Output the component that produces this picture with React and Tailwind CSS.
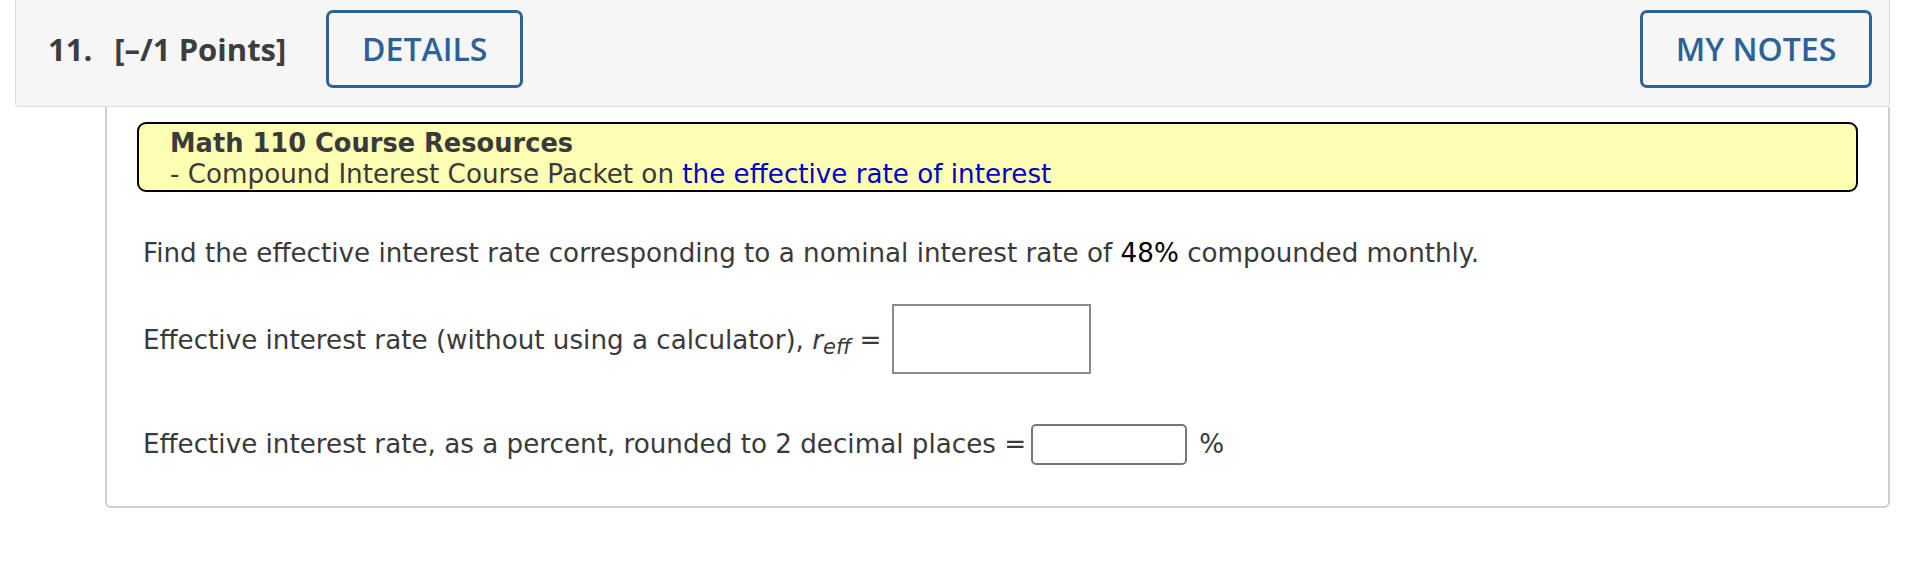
import React from "react";

const QuestionHeader = () => {
  return (
    <div className="mx-[15px] mr-[22px] h-[107px] bg-[#f6f6f6] border-x border-b border-[#dcdcdc] rounded-b-[4px] flex items-start justify-between pt-[10px] pl-[32px] pr-[17px]">
      <div className="flex items-start gap-[40px]">
        <div className="h-[78px] flex items-center font-['Open_Sans',sans-serif] font-bold text-[31px] text-[#3d3d3d]">
          <span>11.</span>
          <span className="ml-[22px]">[–/1 Points]</span>
        </div>
        <button className="h-[78px] w-[197px] border-[3px] border-[#2e6395] rounded-[7px] font-['Open_Sans',sans-serif] font-semibold text-[32px] text-[#2c6296] bg-transparent">
          DETAILS
        </button>
      </div>
      <button className="h-[78px] w-[232px] border-[3px] border-[#2e6395] rounded-[7px] font-['Open_Sans',sans-serif] font-semibold text-[32px] text-[#2c6296] bg-transparent">
        MY NOTES
      </button>
    </div>
  );
};

const App = () => {
  return (
    <div className="w-[1912px] h-[575px] bg-white overflow-hidden">
      <QuestionHeader />

      {/* question body */}
      <div className="ml-[105px] mr-[22px] border-x-2 border-b-2 border-[#cfcfcf] rounded-b-[6px] pt-[15px] pb-[41px] pl-[30px] pr-[30px] font-['DejaVu_Sans',Verdana,sans-serif] text-[26.2px] text-[#3a3a3a]">
        {/* Course resources box */}
        <div className="bg-[#ffffb3] border-2 border-black rounded-[9px] pt-[4px] pl-[31px] leading-[31px]">
          <div className="font-bold text-[25.7px]">Math 110 Course Resources</div>
          <div>
            - Compound Interest Course Packet on{" "}
            <span className="text-[#0000c8]">the effective rate of interest</span>
          </div>
        </div>

        <p className="mt-[45px] pl-[6px] leading-[32px]">
          Find the effective interest rate corresponding to a nominal interest rate of{" "}
          <span className="text-black">48%</span> compounded monthly.
        </p>

        <div className="mt-[35px] pl-[6px] flex items-center">
          <span className="pt-[3px]">
            Effective interest rate (without using a calculator),{" "}
            <i>r</i>
            <sub className="italic text-[21px]">eff</sub> =
          </span>
          <div className="ml-[11px] w-[199px] h-[70px] border-2 border-[#8a8a8a] bg-white"></div>
        </div>

        <div className="mt-[50px] pl-[6px] flex items-center">
          <span className="pt-[1px]">Effective interest rate, as a percent, rounded to 2 decimal places =</span>
          <div className="ml-[5px] w-[156px] h-[41px] border-2 border-[#777] rounded-[5px] bg-white"></div>
          <span className="ml-[12px]">%</span>
        </div>
      </div>
    </div>
  );
};

export default App;
